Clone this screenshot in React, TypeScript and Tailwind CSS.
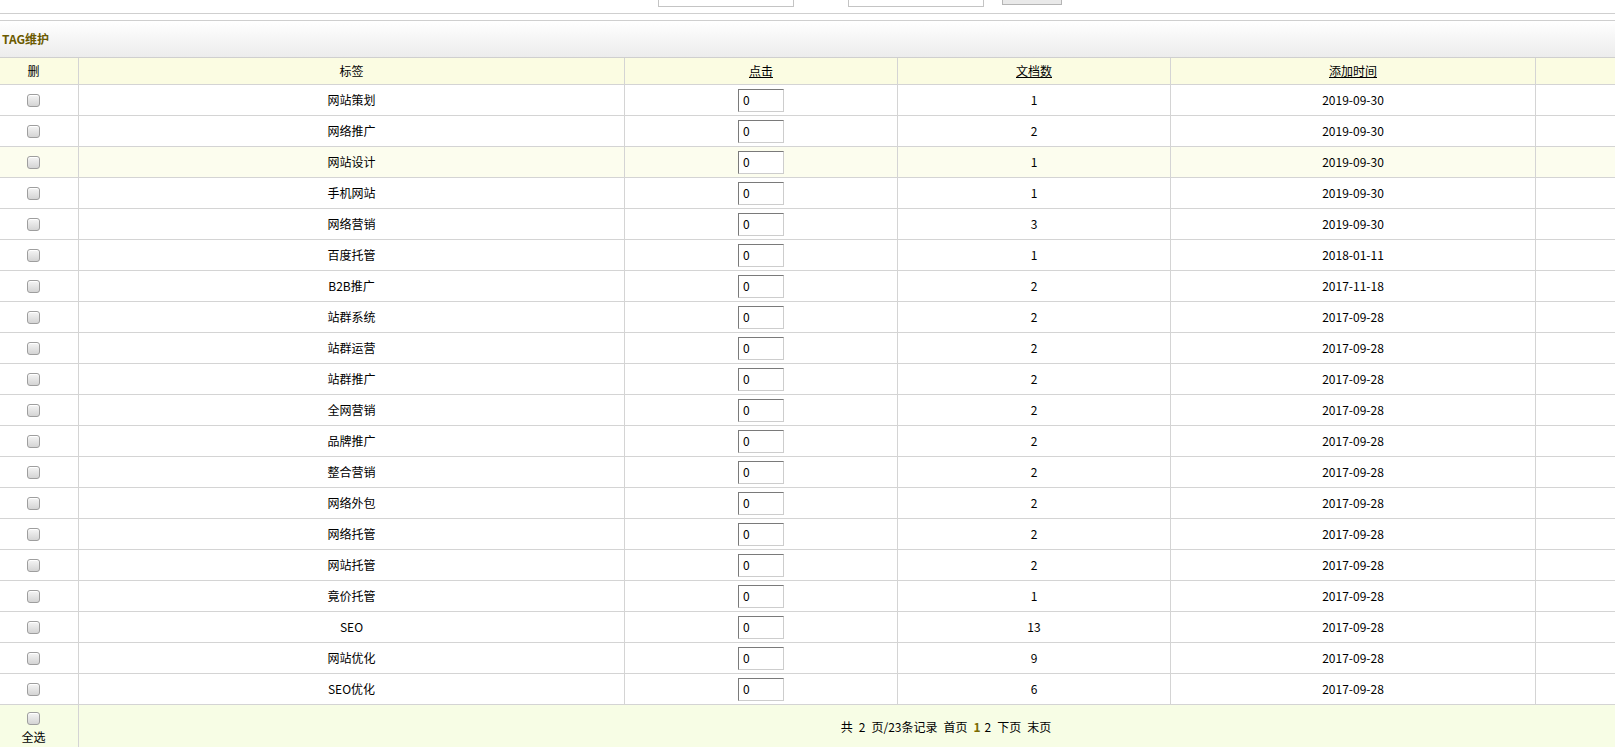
const rows: [string, number, string][] = [
  ["网站策划", 1, "2019-09-30"],
  ["网络推广", 2, "2019-09-30"],
  ["网站设计", 1, "2019-09-30"],
  ["手机网站", 1, "2019-09-30"],
  ["网络营销", 3, "2019-09-30"],
  ["百度托管", 1, "2018-01-11"],
  ["B2B推广", 2, "2017-11-18"],
  ["站群系统", 2, "2017-09-28"],
  ["站群运营", 2, "2017-09-28"],
  ["站群推广", 2, "2017-09-28"],
  ["全网营销", 2, "2017-09-28"],
  ["品牌推广", 2, "2017-09-28"],
  ["整合营销", 2, "2017-09-28"],
  ["网络外包", 2, "2017-09-28"],
  ["网络托管", 2, "2017-09-28"],
  ["网站托管", 2, "2017-09-28"],
  ["竟价托管", 1, "2017-09-28"],
  ["SEO", 13, "2017-09-28"],
  ["网站优化", 9, "2017-09-28"],
  ["SEO优化", 6, "2017-09-28"],
];

function Checkbox() {
  return (
    <span className="block w-[13px] h-[13px] rounded-[3px] border border-[#9e9e9e] bg-gradient-to-b from-[#f5f5f5] to-[#d4d4d4] shadow-[inset_0_1px_0_#fff]" />
  );
}

const grid = "grid grid-cols-[79px_546px_273px_273px_365px_1fr]";
const cell = "flex items-center justify-center border-r border-[#d4d4d4]";

export default function App() {
  return (
    <div className="min-h-[747px] bg-white text-[12px] text-black font-['Noto_Sans_CJK_SC',sans-serif] overflow-hidden">
      {/* search bar, mostly scrolled out of view */}
      <div className="h-[14px] border-b border-[#cfcfcf] flex items-end pl-[658px] overflow-hidden">
        <div className="w-[136px] h-[22px] mb-[6px] border border-[#c4c4c4] bg-white" />
        <div className="w-[136px] h-[22px] mb-[6px] ml-[54px] border border-[#c4c4c4] bg-white" />
        <div className="w-[60px] h-[22px] mb-[8px] ml-[18px] border border-[#b5b5b5] bg-[#e9e9e9]" />
      </div>

      <div className="mt-[6px] h-[38px] border-y border-[#cfcfcf] bg-gradient-to-b from-white to-[#ececec] flex items-center pl-[2px]">
        <span className="font-bold text-[#6b5a00]">TAG维护</span>
      </div>

      <div className={`${grid} h-[27px] bg-[#fbfce2] border-b border-[#d4d4d4]`}>
        <div className={`${cell} pr-[11px]`}>删</div>
        <div className={cell}>标签</div>
        <div className={cell}><span className="underline">点击</span></div>
        <div className={cell}><span className="underline">文档数</span></div>
        <div className={cell}><span className="underline">添加时间</span></div>
        <div />
      </div>

      {rows.map(([tag, docs, date], i) => (
        <div
          key={i}
          className={`${grid} h-[31px] border-b border-[#d4d4d4] ${i === 2 ? "bg-[#fcfdee]" : "bg-white"}`}
        >
          <div className={`${cell} pr-[11px]`}>
            <Checkbox />
          </div>
          <div className={cell}>{tag}</div>
          <div className={cell}>
            <div className="w-[46px] h-[23px] border border-t-[#7a7a7a] border-l-[#7a7a7a] border-r-[#cdcdcd] border-b-[#cdcdcd] bg-white flex items-center pl-[4px]">
              0
            </div>
          </div>
          <div className={cell}>{docs}</div>
          <div className={cell}>{date}</div>
          <div />
        </div>
      ))}

      <div className="grid grid-cols-[79px_1fr] h-[43px] bg-[#f7fde5]">
        <div className="flex flex-col items-center pt-[7px] pr-[11px] border-r border-[#d4d4d4]">
          <Checkbox />
          <span className="mt-[5px] leading-[14px]">全选</span>
        </div>
        <div className="flex items-center justify-center gap-[6px] pl-[198px]">
          <span>共</span>
          <span>2</span>
          <span>页/23条记录</span>
          <span>首页</span>
          <b className="font-bold text-[#7a6a00]">1</b>
          <span className="-ml-[2px]">2</span>
          <span>下页</span>
          <span>末页</span>
        </div>
      </div>
    </div>
  );
}
